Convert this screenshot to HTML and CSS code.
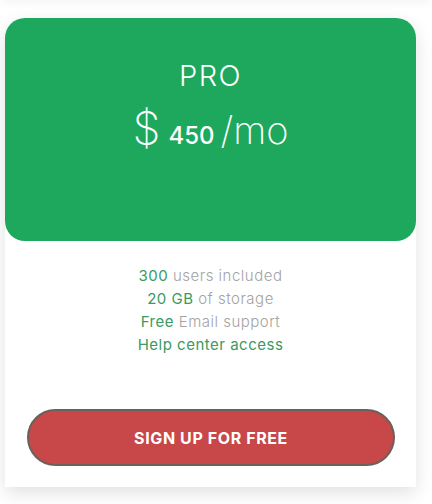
FILE: index.html
```html
<!DOCTYPE html>
<html>
<head>
<meta charset="utf-8">
<link rel="stylesheet" href="styles.css">
</head>
<body>
<div class="prev"></div>
<div class="card">
  <div class="head">
    <div class="title">PRO</div>
    <div class="price"><span class="cur">$</span><span class="amt">450</span><span class="per">/mo</span></div>
  </div>
  <ul class="features">
    <li><span class="hl">300</span> users included</li>
    <li><span class="hl">20 GB</span> of storage</li>
    <li><span class="hl">Free</span> Email support</li>
    <li><span class="hl">Help center access</span></li>
  </ul>
  <div class="cta"><button class="btn">SIGN UP FOR FREE</button></div>
</div>
</body>
</html>
```
FILE: styles.css
```css
html, body { margin: 0; padding: 0; background: #fff; }
body { font-family: "Inter", "Lato", sans-serif; width: 432px; height: 504px; overflow: hidden; }
.prev { height: 0; margin: 0 5px; box-shadow: 0 0 8px 3px rgba(0,0,0,0.06); }
.card {
  margin: 18px 16px 0 5px;
  background: #fff;
  border-radius: 20px 20px 0 0;
  box-shadow: 0 6px 18px rgba(0,0,0,0.12);
  height: 469px;
  display: flex; flex-direction: column;
}
.head {
  background: #1ea85e;
  border-radius: 20px;
  height: 223px;
  color: #fff;
  text-align: center;
  box-sizing: border-box;
  padding-top: 41px;
}
.title { font-size: 29px; font-weight: 300; letter-spacing: 1.5px; line-height: 34px; }
.price { margin-top: 10px; line-height: 50px; display: flex; justify-content: center; align-items: baseline; }
.cur { font-size: 45px; font-weight: 200; }
.amt { font-size: 24px; font-weight: 500; margin-left: 8px; }
.per { font-size: 38px; font-weight: 200; margin-left: 6px; }
.features { list-style: none; margin: 23px 0 0; padding: 0; text-align: center; font-size: 15px; line-height: 23px; color: #a3a3a3; font-weight: 300; letter-spacing: 0.5px; }
.hl { color: #3a9a60; font-weight: 400; }
.cta { padding: 53px 21px 0 22px; }
.btn {
  width: 100%; height: 57px; border-radius: 29px;
  background: #c84748; border: 2px solid #6b615c;
  color: #fff; font-family: inherit; font-weight: 700; font-size: 16px; letter-spacing: 0.6px;
}
```
